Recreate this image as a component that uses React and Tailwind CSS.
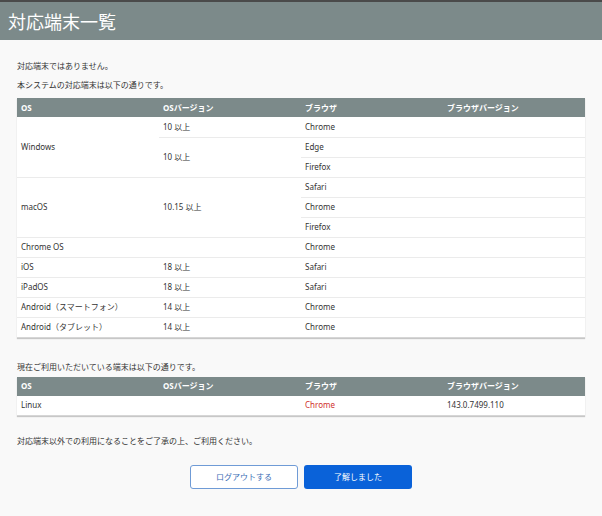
export default function App() {
  const font = { fontFamily: '"Noto Sans", "Noto Sans CJK JP", sans-serif' };
  const th = "h-[19px] px-[4px] text-left align-middle font-bold text-white w-1/4";
  const td = "h-[20px] px-[4px] align-middle text-[#333] border-b border-[#ebebeb]";
  return (
    <div className="w-[602px] h-[516px] bg-[#f9f9f9] overflow-hidden" style={font}>
      <div className="h-[2px] bg-[#4a4a4a]" />
      <div className="h-[38px] bg-[#7c8a8a] flex items-center px-[8px]">
        <h1 className="text-[18px] text-white leading-none" style={{ fontFamily: '"Noto Sans CJK JP", sans-serif' }}>対応端末一覧</h1>
      </div>
      <div className="px-[17px] text-[8px] text-[#333]">
        <p className="mt-[20px] leading-[12px]">対応端末ではありません。</p>
        <p className="mt-[7px] leading-[12px]">本システムの対応端末は以下の通りです。</p>
        <table className="mt-[7px] w-[568px] border-collapse bg-white table-fixed shadow-[0_1px_1px_rgba(0,0,0,0.2)]">
          <thead>
            <tr className="bg-[#7c8a8a]">
              <th className={th}>OS</th>
              <th className={th}>OSバージョン</th>
              <th className={th}>ブラウザ</th>
              <th className={th}>ブラウザバージョン</th>
            </tr>
          </thead>
          <tbody>
            <tr>
              <td className={td} rowSpan={3}>Windows</td>
              <td className={td}>10 以上</td>
              <td className={td}>Chrome</td>
              <td className={td}></td>
            </tr>
            <tr>
              <td className={td} rowSpan={2}>10 以上</td>
              <td className={td}>Edge</td>
              <td className={td}></td>
            </tr>
            <tr>
              <td className={td}>Firefox</td>
              <td className={td}></td>
            </tr>
            <tr>
              <td className={td} rowSpan={3}>macOS</td>
              <td className={td} rowSpan={3}>10.15 以上</td>
              <td className={td}>Safari</td>
              <td className={td}></td>
            </tr>
            <tr>
              <td className={td}>Chrome</td>
              <td className={td}></td>
            </tr>
            <tr>
              <td className={td}>Firefox</td>
              <td className={td}></td>
            </tr>
            <tr>
              <td className={td}>Chrome OS</td>
              <td className={td}></td>
              <td className={td}>Chrome</td>
              <td className={td}></td>
            </tr>
            <tr>
              <td className={td}>iOS</td>
              <td className={td}>18 以上</td>
              <td className={td}>Safari</td>
              <td className={td}></td>
            </tr>
            <tr>
              <td className={td}>iPadOS</td>
              <td className={td}>18 以上</td>
              <td className={td}>Safari</td>
              <td className={td}></td>
            </tr>
            <tr>
              <td className={td}>Android（スマートフォン）</td>
              <td className={td}>14 以上</td>
              <td className={td}>Chrome</td>
              <td className={td}></td>
            </tr>
            <tr>
              <td className={td + " border-b-[#d6d6d6]"}>Android（タブレット）</td>
              <td className={td + " border-b-[#d6d6d6]"}>14 以上</td>
              <td className={td + " border-b-[#d6d6d6]"}>Chrome</td>
              <td className={td + " border-b-[#d6d6d6]"}></td>
            </tr>
          </tbody>
        </table>
        <p className="mt-[23px] leading-[12px]">現在ご利用いただいている端末は以下の通りです。</p>
        <table className="mt-[4px] w-[568px] border-collapse bg-white table-fixed shadow-[0_1px_1px_rgba(0,0,0,0.2)]">
          <thead>
            <tr className="bg-[#7c8a8a]">
              <th className={th}>OS</th>
              <th className={th}>OSバージョン</th>
              <th className={th}>ブラウザ</th>
              <th className={th}>ブラウザバージョン</th>
            </tr>
          </thead>
          <tbody>
            <tr>
              <td className={td + " border-b-[#d6d6d6]"}>Linux</td>
              <td className={td + " border-b-[#d6d6d6]"}></td>
              <td className={td + " border-b-[#d6d6d6] text-[#d0312d]"}>Chrome</td>
              <td className={td + " border-b-[#d6d6d6]"}>143.0.7499.110</td>
            </tr>
          </tbody>
        </table>
        <p className="mt-[19px] leading-[12px]">対応端末以外での利用になることをご了承の上、ご利用ください。</p>
        <div className="mt-[18px] flex justify-center gap-[6px]">
          <button className="w-[108px] h-[24px] rounded-[3px] border border-[#6f9bd6] bg-white text-[#3a6db5] text-[8px]">ログアウトする</button>
          <button className="w-[108px] h-[24px] rounded-[3px] bg-[#0a62d9] text-white text-[8px]">了解しました</button>
        </div>
      </div>
    </div>
  );
}
